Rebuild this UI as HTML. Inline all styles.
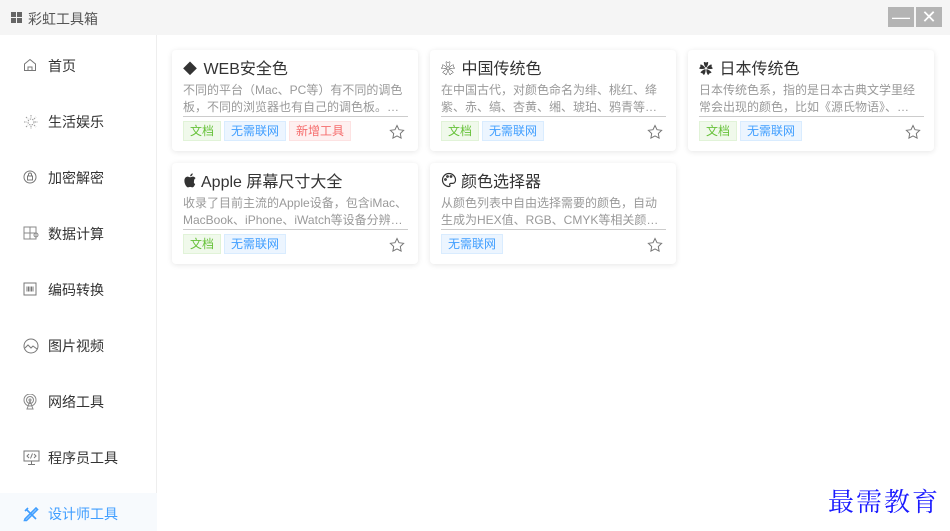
<!DOCTYPE html>
<html><head><meta charset="utf-8"><style>
*{margin:0;padding:0;box-sizing:border-box}
body{width:950px;height:531px;overflow:hidden;background:#fff;font-family:"Liberation Sans","Noto Sans CJK SC",sans-serif;position:relative}
.top{position:absolute;left:0;top:0;width:950px;height:35px;background:#f5f5f5}
.top .t{position:absolute;left:28px;top:9px;font-size:14px;color:#555}
.top .g{position:absolute;left:11px;top:12px;width:11px;height:11px}
.top .g i{position:absolute;width:5px;height:5px;background:#666}
.btn{position:absolute;top:7px;width:26px;height:20px;background:#b4b4b4;color:#fff;text-align:center;font-size:18px;line-height:20px}
.side{position:absolute;left:0;top:35px;width:157px;height:496px;border-right:1px solid #eee}
.it{position:absolute;left:0;width:157px;height:40px;font-size:14px;color:#333}
.it span{position:absolute;left:48px;top:11px}
.it svg{position:absolute;left:23px;top:13px}
.card{position:absolute;width:246px;height:101px;background:#fff;border-radius:4px;box-shadow:0 1px 6px rgba(0,0,0,.1)}
.card h3{position:absolute;left:11px;top:5px;font-size:16px;font-weight:normal;color:#333;white-space:nowrap}
.card h3 b{display:inline-block;width:16px;font-weight:normal;font-size:14px}
.card h3 svg{vertical-align:-1px;margin-right:4px}
.card p{position:absolute;left:11px;top:32px;width:225px;font-size:12px;line-height:17px;color:#999;overflow:hidden;border-bottom:1px solid #ccc;height:35px}
.tags{position:absolute;left:11px;top:71px}
.tag{display:inline-block;font-size:12px;line-height:18px;padding:0 6px;border:1px solid;margin-right:3px}
.d{color:#67c23a;background:#f0f9eb;border-color:#e1f3d8}
.n{color:#409eff;background:#ecf5ff;border-color:#d9ecff}
.x{color:#f56c6c;background:#fef0f0;border-color:#fde2e2}
.star{position:absolute;right:13px;top:74px}
</style></head><body>
<div class="top"><div class="g"><i style="left:0;top:0"></i><i style="left:6px;top:0"></i><i style="left:0;top:6px"></i><i style="left:6px;top:6px"></i></div><div class="t">彩虹工具箱</div>
<div class="btn" style="left:888px">—</div><div class="btn" style="left:916px">✕</div></div>
<div class="side">
<div class="it" style="top:10px"><svg width="14" height="14" viewBox="0 0 14 14" fill="none" stroke="#777"><path d="M1.5 6L7 1.5 12.5 6V12.5H1.5Z M5 12.5V9h4v3.5"/></svg><span>首页</span></div>
<div class="it" style="top:66px"><svg width="16" height="16" viewBox="0 0 16 16" fill="none" stroke="#999" stroke-dasharray="1.5 1"><circle cx="8" cy="8" r="3"/><path d="M8 1v3M8 12v3M1 8h3M12 8h3M3 3l2 2M11 11l2 2M3 13l2-2M11 5l2-2"/></svg><span>生活娱乐</span></div>
<div class="it" style="top:122px"><svg width="14" height="14" viewBox="0 0 14 14" fill="none" stroke="#777"><circle cx="7" cy="7" r="6"/><rect x="4.5" y="6" width="5" height="4"/><path d="M5.5 6V4.5a1.5 1.5 0 013 0V6"/></svg><span>加密解密</span></div>
<div class="it" style="top:178px"><svg width="16" height="14" viewBox="0 0 16 14" fill="none" stroke="#888"><rect x="1" y="1" width="12" height="12"/><path d="M7 1v12M1 7h12"/><circle cx="13" cy="9" r="2"/></svg><span>数据计算</span></div>
<div class="it" style="top:234px"><svg width="14" height="14" viewBox="0 0 14 14" fill="none" stroke="#777"><rect x="1" y="1" width="12" height="12"/><path d="M4 4.5v5M5.5 4.5v5M7 4.5v5M8.5 4.5v5M10 4.5v5"/></svg><span>编码转换</span></div>
<div class="it" style="top:290px"><svg width="16" height="16" viewBox="0 0 16 16" fill="none" stroke="#777"><circle cx="8" cy="8" r="7"/><path d="M2 10l3-3 3 3 2-2 4 3"/></svg><span>图片视频</span></div>
<div class="it" style="top:346px"><svg width="14" height="16" viewBox="0 0 14 16" fill="none" stroke="#888"><circle cx="7" cy="6" r="6"/><circle cx="7" cy="6" r="3.5"/><circle cx="7" cy="6" r="1"/><path d="M7 7L4 15h6L7 7"/></svg><span>网络工具</span></div>
<div class="it" style="top:402px"><svg width="17" height="16" viewBox="0 0 17 16" fill="none" stroke="#777"><rect x="1" y="1" width="15" height="10"/><path d="M8.5 11v3M5 14.5h7M6 4l-2 2 2 2M11 4l2 2-2 2M9.5 3.5l-2 5"/></svg><span>程序员工具</span></div>
<div class="it" style="top:458px;height:38px;background:#f7fafd;color:#409eff"><svg width="16" height="16" viewBox="0 0 16 16" fill="none" stroke="#409eff" stroke-width="1.6"><path d="M2 13L13 2l1.5 1.5L3.5 14.5 1.5 14.5z M3 3l10 10M2 5l3-3"/></svg><span>设计师工具</span></div>
</div>

<div class="card" style="left:172px;top:50px"><h3><b>◆</b> WEB安全色</h3><p>不同的平台（Mac、PC等）有不同的调色板，不同的浏览器也有自己的调色板。…</p><div class="tags"><span class="tag d">文档</span><span class="tag n">无需联网</span><span class="tag x">新增工具</span></div><svg class="star" width="16" height="16" viewBox="0 0 16 16" fill="none" stroke="#777"><path d="M8 1.5l2 4.2 4.6.6-3.3 3.2.8 4.6L8 11.9l-4.1 2.2.8-4.6L1.4 6.3 6 5.7z"/></svg></div>
<div class="card" style="left:430px;top:50px"><h3><b>❀</b> 中国传统色</h3><p>在中国古代，对颜色命名为绯、桃红、绛紫、赤、缟、杏黄、缃、琥珀、鸦青等…</p><div class="tags"><span class="tag d">文档</span><span class="tag n">无需联网</span></div><svg class="star" width="16" height="16" viewBox="0 0 16 16" fill="none" stroke="#777"><path d="M8 1.5l2 4.2 4.6.6-3.3 3.2.8 4.6L8 11.9l-4.1 2.2.8-4.6L1.4 6.3 6 5.7z"/></svg></div>
<div class="card" style="left:688px;top:50px"><h3><b>✿</b> 日本传统色</h3><p>日本传统色系，指的是日本古典文学里经常会出现的颜色，比如《源氏物语》、…</p><div class="tags"><span class="tag d">文档</span><span class="tag n">无需联网</span></div><svg class="star" width="16" height="16" viewBox="0 0 16 16" fill="none" stroke="#777"><path d="M8 1.5l2 4.2 4.6.6-3.3 3.2.8 4.6L8 11.9l-4.1 2.2.8-4.6L1.4 6.3 6 5.7z"/></svg></div>
<div class="card" style="left:172px;top:163px"><h3><svg width="14" height="15" viewBox="0 0 14 16"><path fill="#333" d="M11.3 8.5c0-2 1.6-2.9 1.7-3-1-1.4-2.4-1.6-2.9-1.6-1.2-.1-2.4.7-3 .7s-1.6-.7-2.6-.7C3.1 3.9 1 5 1 8.4c0 1 .2 2.1.6 3.1.5 1.4 1.9 3.9 3.3 3.8.8 0 1.3-.5 2.3-.5s1.4.5 2.3.5c1.5 0 2.6-2.4 3-3.6-2-.9-1.2-2.5-1.2-3.2zM9.2 2.5c.8-.9.7-1.8.7-2.1-.7 0-1.5.5-2 1-.5.6-.8 1.3-.7 2.1.8.1 1.5-.4 2-1z"/></svg>Apple 屏幕尺寸大全</h3><p>收录了目前主流的Apple设备，包含iMac、MacBook、iPhone、iWatch等设备分辨…</p><div class="tags"><span class="tag d">文档</span><span class="tag n">无需联网</span></div><svg class="star" width="16" height="16" viewBox="0 0 16 16" fill="none" stroke="#777"><path d="M8 1.5l2 4.2 4.6.6-3.3 3.2.8 4.6L8 11.9l-4.1 2.2.8-4.6L1.4 6.3 6 5.7z"/></svg></div>
<div class="card" style="left:430px;top:163px"><h3><svg width="16" height="16" viewBox="0 0 16 16" fill="none" stroke="#333" stroke-width="1.2"><path d="M8 1.5a6.5 6.5 0 100 13c1 0 1.2-.8.8-1.5-.5-.8 0-1.6 1-1.6h1.7c1.7 0 3-1.3 3-3.4 0-3.6-2.9-6.5-6.5-6.5z"/><circle cx="4.5" cy="7.5" r=".8"/><circle cx="6.5" cy="4.5" r=".8"/><circle cx="10" cy="4.5" r=".8"/></svg>颜色选择器</h3><p>从颜色列表中自由选择需要的颜色，自动生成为HEX值、RGB、CMYK等相关颜…</p><div class="tags"><span class="tag n">无需联网</span></div><svg class="star" width="16" height="16" viewBox="0 0 16 16" fill="none" stroke="#777"><path d="M8 1.5l2 4.2 4.6.6-3.3 3.2.8 4.6L8 11.9l-4.1 2.2.8-4.6L1.4 6.3 6 5.7z"/></svg></div>

<div style="position:absolute;left:828px;top:482px;font-family:'Noto Serif CJK SC',serif;font-size:26px;color:#1a1aff;letter-spacing:2px">最需教育</div>
</body></html>
